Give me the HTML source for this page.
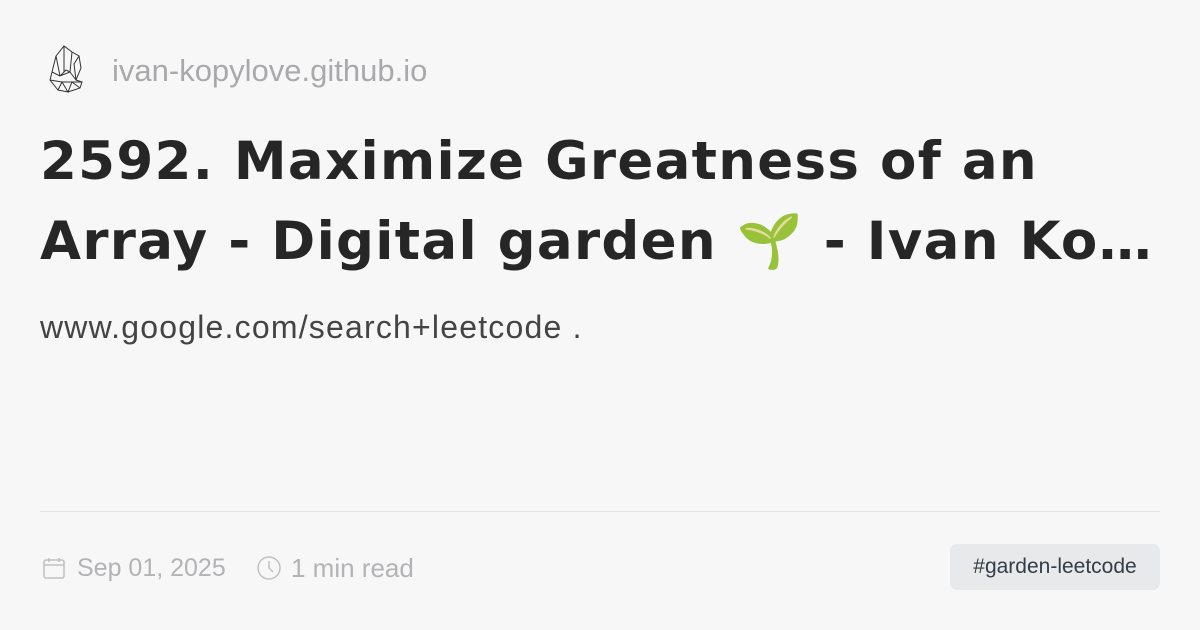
<!DOCTYPE html>
<html><head><meta charset="utf-8"><style>
html,body{margin:0;padding:0}
body{width:1200px;height:630px;background:#f8f7f8;position:relative;overflow:hidden;font-family:"Liberation Sans",sans-serif}
.site{position:absolute;left:112px;top:51px;font-size:31px;color:#a9a9ab;line-height:40px}
.logo{position:absolute;left:46px;top:42px}
h1{position:absolute;left:40px;top:122px;margin:0;white-space:nowrap;font-family:"DejaVu Sans",sans-serif;font-size:53px;font-weight:bold;color:#262626;line-height:80px;letter-spacing:1.3px}
.desc{position:absolute;left:40px;top:307px;font-size:32px;color:#444;line-height:40px;letter-spacing:1.2px}
.hr{position:absolute;left:40px;right:40px;top:511px;height:1px;background:#e4e4e6}
.meta{position:absolute;top:550px;color:#b3b3b5;line-height:36px}
.tag{position:absolute;left:950px;top:544px;width:210px;height:46px;background:#e8e9eb;border-radius:7px;font-size:21px;color:#333d47;line-height:46px;text-align:center}
</style></head><body>
<svg class="logo" width="42" height="52" viewBox="0 0 42 52" fill="none" stroke="#333" stroke-width="1">
<path d="M10 14 L18 4 L26 10 L24 30 L14 34 Z M18 4 L18 30 M26 10 L33 14 L35 26 L30 38 L24 30 M33 14 L28 22 L30 38 M10 14 L6 30 L14 34 M6 30 L4 38 L12 48 L22 50 L34 46 L36 40 L30 38 M12 48 L16 40 L22 50 L26 40 L34 46 M4 38 L16 40 L26 40 L36 40 M14 34 L20 28 L24 30"/>
</svg>
<div class="site">ivan-kopylove.github.io</div>
<h1>2592. Maximize Greatness of an<br>Array - Digital garden 🌱 - Ivan Ko…</h1>
<div class="desc">www.google.com/search+leetcode .</div>
<div class="hr"></div>
<svg style="position:absolute;left:42px;top:556px" width="24" height="24" viewBox="0 0 24 24" fill="none" stroke="#c0c0c2" stroke-width="1.5"><rect x="2" y="4" width="20" height="18" rx="2"/><path d="M2 9h20M7 2v4M17 2v4"/></svg>
<div class="meta" style="left:77px;font-size:25px">Sep 01, 2025</div>
<svg style="position:absolute;left:256px;top:555px" width="26" height="26" viewBox="0 0 26 26" fill="none" stroke="#c0c0c2" stroke-width="1.5"><circle cx="13" cy="13" r="11"/><path d="M13 6v7l4 4"/></svg>
<div class="meta" style="left:291px;font-size:26px">1 min read</div>
<div class="tag">#garden-leetcode</div>
</body></html>
